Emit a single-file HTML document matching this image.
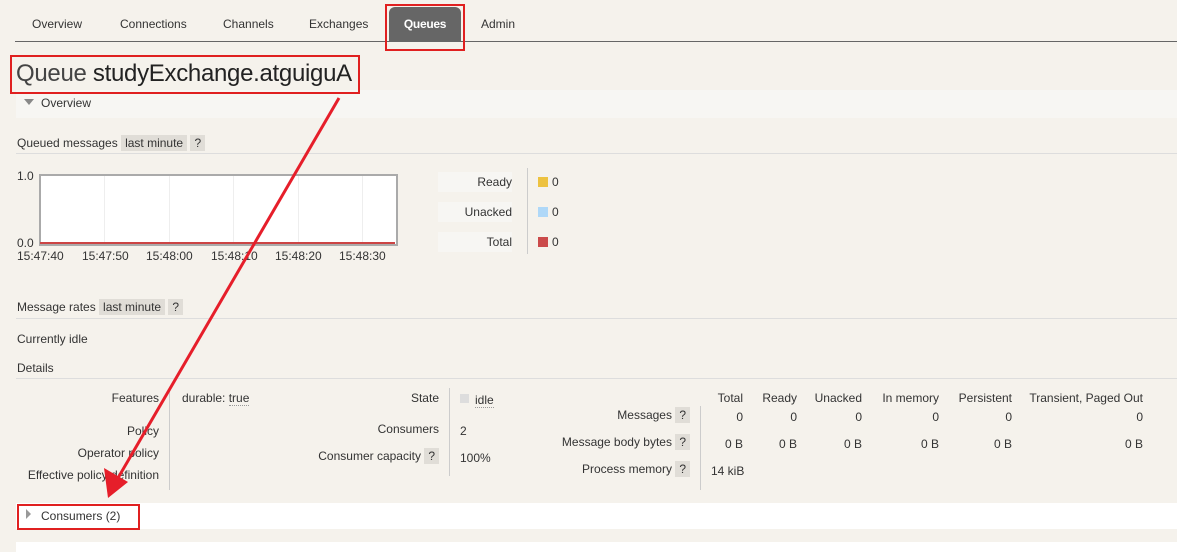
<!DOCTYPE html><html><head><style>
body{margin:0;width:1177px;height:550px;overflow:hidden;background:#f5f2ec;font-family:"Liberation Sans",sans-serif;font-size:12px;color:#333;position:relative}
.a{position:absolute;white-space:nowrap}
.r{text-align:right}
.q{background:#e0ddd7;padding:1px 4px}
.sec{position:absolute;left:16px;right:0;height:28px;background:#f7f6f3}
.sep{position:absolute;left:16px;right:0;height:1px;background:#ddd}
.vl{position:absolute;width:1px;background:#ccc}
</style></head><body>
<div class="a" style="left:32px;top:17px">Overview</div>
<div class="a" style="left:120px;top:17px">Connections</div>
<div class="a" style="left:223px;top:17px">Channels</div>
<div class="a" style="left:309px;top:17px">Exchanges</div>
<div class="a" style="left:389px;top:7px;width:72px;height:34px;background:#666;border-radius:6px 6px 0 0;color:#fff;font-weight:bold;text-align:center;line-height:34px;letter-spacing:-0.3px">Queues</div>
<div class="a" style="left:481px;top:17px">Admin</div>
<div class="a" style="left:15px;top:41px;right:0;height:1px;background:#666"></div>
<div class="a" style="left:385px;top:4px;width:76px;height:43px;border:2px solid #e02020"></div>
<div class="a" style="left:16px;top:60px;font-size:24px;color:#222;letter-spacing:-0.3px"><span style="color:#444">Queue</span> studyExchange.atguiguA</div>
<div class="sec" style="top:90px"></div>
<div class="a" style="left:10px;top:55px;width:346px;height:35px;border:2px solid #e02020"></div>
<div class="a" style="left:24px;top:99px;width:0;height:0;border-left:5px solid transparent;border-right:5px solid transparent;border-top:6px solid #888"></div>
<div class="a" style="left:41px;top:96px">Overview</div>
<div class="a" style="left:17px;top:136px">Queued messages <span class="q">last minute</span> <span class="q">?</span></div>
<div class="sep" style="top:153px"></div>
<div class="a" style="left:17px;top:169px">1.0</div><div class="a" style="left:17px;top:236px">0.0</div>
<div class="a" style="left:39px;top:174px;width:355px;height:68px;border:2px solid #aaa;background:#fff"></div>
<div class="a" style="left:104px;top:176px;width:1px;height:68px;background:#eee"></div>
<div class="a" style="left:169px;top:176px;width:1px;height:68px;background:#eee"></div>
<div class="a" style="left:233px;top:176px;width:1px;height:68px;background:#eee"></div>
<div class="a" style="left:298px;top:176px;width:1px;height:68px;background:#eee"></div>
<div class="a" style="left:362px;top:176px;width:1px;height:68px;background:#eee"></div>
<div class="a" style="left:40px;top:242px;width:355px;height:2px;background:#c44"></div>
<div class="a" style="left:17px;top:249px">15:47:40</div><div class="a" style="left:82px;top:249px">15:47:50</div><div class="a" style="left:146px;top:249px">15:48:00</div><div class="a" style="left:211px;top:249px">15:48:10</div><div class="a" style="left:275px;top:249px">15:48:20</div><div class="a" style="left:339px;top:249px">15:48:30</div>
<div class="a r" style="left:438px;top:172px;width:74px;height:20px;line-height:20px;background:#f7f6f3">Ready</div>
<div class="a r" style="left:438px;top:202px;width:74px;height:20px;line-height:20px;background:#f7f6f3">Unacked</div>
<div class="a r" style="left:438px;top:232px;width:74px;height:20px;line-height:20px;background:#f7f6f3">Total</div>
<div class="vl" style="left:527px;top:168px;height:86px"></div>
<div class="a" style="left:538px;top:177px;width:10px;height:10px;background:#edc240"></div><div class="a" style="left:552px;top:175px">0</div>
<div class="a" style="left:538px;top:207px;width:10px;height:10px;background:#afd8f8"></div><div class="a" style="left:552px;top:205px">0</div>
<div class="a" style="left:538px;top:237px;width:10px;height:10px;background:#cb4b4b"></div><div class="a" style="left:552px;top:235px">0</div>
<div class="a" style="left:17px;top:300px">Message rates <span class="q">last minute</span> <span class="q">?</span></div>
<div class="sep" style="top:318px"></div>
<div class="a" style="left:17px;top:332px">Currently idle</div>
<div class="a" style="left:17px;top:361px">Details</div>
<div class="sep" style="top:378px"></div>
<div class="a r" style="left:0;width:159px;top:391px">Features</div>
<div class="a r" style="left:0;width:159px;top:424px">Policy</div>
<div class="a r" style="left:0;width:159px;top:446px">Operator policy</div>
<div class="a r" style="left:0;width:159px;top:468px">Effective policy definition</div>
<div class="vl" style="left:169px;top:388px;height:102px"></div>
<div class="a" style="left:182px;top:391px">durable: <span style="border-bottom:1px dotted #999">true</span></div>
<div class="a r" style="left:250px;width:189px;top:391px">State</div>
<div class="a r" style="left:250px;width:189px;top:422px">Consumers</div>
<div class="a r" style="left:250px;width:189px;top:449px">Consumer capacity <span class="q">?</span></div>
<div class="vl" style="left:449px;top:388px;height:88px"></div>
<div class="a" style="left:460px;top:394px;width:9px;height:9px;background:#ddd"></div>
<div class="a" style="left:475px;top:393px;border-bottom:1px dotted #999">idle</div>
<div class="a" style="left:460px;top:424px">2</div>
<div class="a" style="left:460px;top:451px">100%</div>
<div class="a r" style="left:500px;width:190px;top:408px">Messages <span class="q">?</span></div>
<div class="a r" style="left:500px;width:190px;top:435px">Message body bytes <span class="q">?</span></div>
<div class="a r" style="left:500px;width:190px;top:462px">Process memory <span class="q">?</span></div>
<div class="vl" style="left:700px;top:406px;height:84px"></div>
<div class="a r" style="left:700px;width:43px;top:391px">Total</div>
<div class="a r" style="left:750px;width:47px;top:391px">Ready</div>
<div class="a r" style="left:800px;width:62px;top:391px">Unacked</div>
<div class="a r" style="left:870px;width:69px;top:391px">In memory</div>
<div class="a r" style="left:940px;width:72px;top:391px">Persistent</div>
<div class="a r" style="left:1020px;width:123px;top:391px">Transient, Paged Out</div>
<div class="a r" style="left:700px;width:43px;top:410px">0</div><div class="a r" style="left:750px;width:47px;top:410px">0</div><div class="a r" style="left:800px;width:62px;top:410px">0</div><div class="a r" style="left:870px;width:69px;top:410px">0</div><div class="a r" style="left:940px;width:72px;top:410px">0</div><div class="a r" style="left:1020px;width:123px;top:410px">0</div>
<div class="a r" style="left:700px;width:43px;top:437px">0 B</div><div class="a r" style="left:750px;width:47px;top:437px">0 B</div><div class="a r" style="left:800px;width:62px;top:437px">0 B</div><div class="a r" style="left:870px;width:69px;top:437px">0 B</div><div class="a r" style="left:940px;width:72px;top:437px">0 B</div><div class="a r" style="left:1020px;width:123px;top:437px">0 B</div>
<div class="a" style="left:711px;top:464px">14 kiB</div>
<div class="a" style="left:16px;right:0;top:503px;height:26px;background:#fff"></div>
<div class="a" style="left:26px;top:509px;width:0;height:0;border-top:5px solid transparent;border-bottom:5px solid transparent;border-left:5px solid #999"></div>
<div class="a" style="left:41px;top:509px">Consumers (2)</div>
<div class="a" style="left:17px;top:504px;width:119px;height:22px;border:2px solid #e02020"></div>
<div class="a" style="left:16px;right:0;top:542px;height:10px;background:#fff"></div>
<svg class="a" style="left:0;top:0" width="1177" height="550"><line x1="339" y1="98" x2="118" y2="478" stroke="#e61e2a" stroke-width="3"/><polygon points="108,498 104,468 128,482" fill="#e61e2a"/></svg>
</body></html>
